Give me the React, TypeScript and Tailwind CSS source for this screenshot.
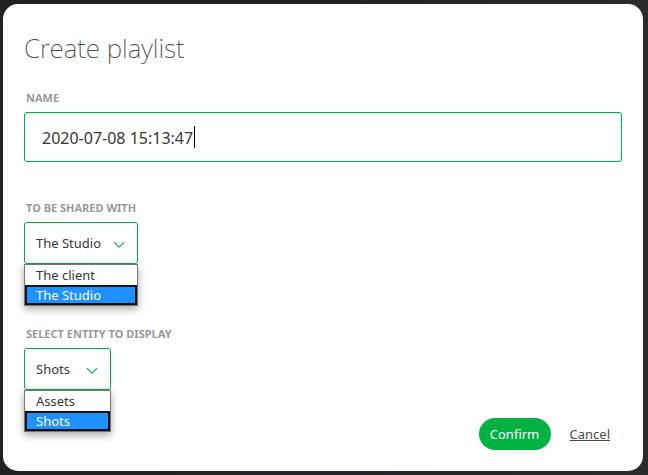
import { useState } from "react";

type PickerProps = {
  id: string;
  label: string;
  options: string[];
  initial: string;
  width: string;
};

function Picker({ id, label, options, initial, width }: PickerProps) {
  const [value, setValue] = useState(initial);
  return (
    <div>
      <label
        htmlFor={id}
        className="block pl-0.5 text-[11px] leading-4 font-bold text-[#999] uppercase"
      >
        {label}
      </label>
      <div className={"relative mt-1.5 " + width}>
        <select
          id={id}
          value={value}
          onChange={(e) => setValue(e.target.value)}
          className="block h-[42px] w-full appearance-none rounded-[3px] border border-[#00b242] bg-white pt-0.5 pl-[11px] text-[13px] text-[#363636] outline-none"
        >
          {options.map((o) => (
            <option key={o}>{o}</option>
          ))}
        </select>
        <svg
          aria-hidden="true"
          viewBox="0 0 12 8"
          className="pointer-events-none absolute top-[19px] right-[13px] h-2 w-3"
          fill="none"
          stroke="#22b85a"
          strokeWidth="1.3"
        >
          <path d="M1 1.2 6 6.2 11 1.2" />
        </svg>
        <ul
          role="listbox"
          aria-label={label}
          className="absolute top-full left-0 w-full border border-[#767676] bg-white text-[13px] leading-5 text-[#363636] shadow-[0_3px_8px_rgba(0,0,0,0.35)]"
        >
          {options.map((o) => (
            <li
              key={o}
              role="option"
              aria-selected={o === value}
              onClick={() => setValue(o)}
              className={
                o === value
                  ? "h-5 border-2 border-[#101010] bg-[#1e90ff] pl-[9px] leading-4 text-white"
                  : "h-5 pl-[11px]"
              }
            >
              {o}
            </li>
          ))}
        </ul>
      </div>
    </div>
  );
}

export default function App() {
  const [name, setName] = useState("2020-07-08 15:13:47");
  return (
    <div className="min-h-screen bg-[#2a2a2a] bg-linear-to-r from-[#222222] via-[#222326] to-[#2b2b2b] pt-1 pr-[5px] pb-1 pl-[3px] font-['Noto_Sans','Open_Sans',sans-serif]">
      <form
        role="dialog"
        aria-labelledby="dialog-title"
        onSubmit={(e) => e.preventDefault()}
        className="rounded-[15px] bg-white px-[21px] pt-6 pb-[21px]"
      >
        <h1
          id="dialog-title"
          className="text-[26px] leading-10 font-extralight text-[#4a4a4a]"
        >
          Create playlist
        </h1>
        <div className="mt-[22px]">
          <label
            htmlFor="name"
            className="block pl-0.5 text-[11px] leading-4 font-bold text-[#999] uppercase"
          >
            Name
          </label>
          <div className="relative mt-1.5">
            <input
              id="name"
              type="text"
              value={name}
              onChange={(e) => setName(e.target.value)}
              className="block h-[50px] w-full rounded-[3px] border border-[#00b242] bg-white px-[17px] pt-0.5 text-[16px] text-[#363636] caret-transparent shadow-[inset_0_1px_2px_rgba(10,10,10,0.1)] outline-none"
            />
            <span
              aria-hidden="true"
              className="absolute top-[14px] left-[170px] h-[22px] w-px bg-black"
            />
          </div>
        </div>
        <div className="mt-[38px]">
          <Picker
            id="shared"
            label="To be shared with"
            options={["The client", "The Studio"]}
            initial="The Studio"
            width="w-[114px]"
          />
        </div>
        <div className="mt-[62px]">
          <Picker
            id="entity"
            label="Select entity to display"
            options={["Assets", "Shots"]}
            initial="Shots"
            width="w-[87px]"
          />
        </div>
        <div className="mt-7 flex items-center justify-end gap-[19px] pr-3">
          <button
            type="submit"
            className="h-8 w-[72px] rounded-full bg-[#00b242] pt-0.5 text-[13px] text-white"
          >
            Confirm
          </button>
          <button
            type="button"
            className="pt-0.5 text-[13px] text-[#4a4a4a] underline"
          >
            Cancel
          </button>
        </div>
      </form>
    </div>
  );
}
